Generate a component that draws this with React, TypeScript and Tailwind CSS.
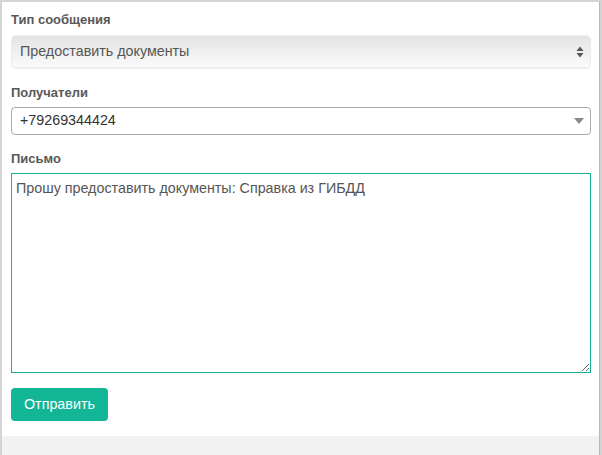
import React from 'react';

function UpDownArrows() {
  return (
    <svg width="8" height="12" viewBox="0 0 8 12" className="text-[#555]">
      <path d="M4 0.5 L7.5 5 L0.5 5 Z" fill="currentColor" />
      <path d="M4 11.5 L7.5 7 L0.5 7 Z" fill="currentColor" />
    </svg>
  );
}

function Caret() {
  return (
    <svg width="10" height="6" viewBox="0 0 10 6" className="text-[#888]">
      <path d="M0 0 L10 0 L5 6 Z" fill="currentColor" />
    </svg>
  );
}

export default function App() {
  return (
    <div className="w-[602px] h-[455px] bg-[#d4d4d4] pl-[2px] pt-[2px] pr-[2px] flex flex-col font-['Liberation_Sans',Arial,sans-serif]">
      <div className="flex-1 flex flex-col bg-white border-r border-[#b8b8b8]">
        <div className="pl-[9px] pr-[7px] pt-[9px] pb-[15px]">
          {/* Message type */}
          <label className="block text-[13px] leading-[18px] font-bold text-[#585858] mb-[6px]">Тип сообщения</label>
          <div className="h-[33px] w-[580px] rounded-[5px] bg-gradient-to-b from-[#e3e3e3] to-[#fbfbfb] shadow-[0_1px_1px_rgba(0,0,0,0.08)] border border-[#ececec] flex items-center justify-between pl-[8px] pr-[6px]">
            <span className="text-[14.3px] text-[#555]">Предоставить документы</span>
            <UpDownArrows />
          </div>

          {/* Recipients */}
          <label className="block text-[13px] leading-[18px] font-bold text-[#585858] mt-[16px] mb-[5px]">Получатели</label>
          <div className="h-[28px] w-[580px] rounded-[4px] bg-white border border-[#aaa] flex items-center justify-between pl-[8px] pr-[6px]">
            <span className="text-[14.3px] text-[#333]">+79269344424</span>
            <Caret />
          </div>

          {/* Letter */}
          <label className="block text-[13px] leading-[18px] font-bold text-[#585858] mt-[15px] mb-[5px]">Письмо</label>
          <textarea
            readOnly
            defaultValue="Прошу предоставить документы: Справка из ГИБДД"
            className="block w-[580px] h-[200px] border border-[#13b394] bg-white px-[4px] py-[4px] text-[14.3px] leading-[20px] text-[#555] outline-none resize-y font-['Liberation_Sans',Arial,sans-serif]"
          />

          <button className="mt-[15px] h-[33px] px-[13px] rounded-[4px] bg-[#12b596] text-white text-[14.3px]">
            Отправить
          </button>
        </div>
        <div className="flex-1 bg-[#f2f2f2]" />
      </div>
    </div>
  );
}
